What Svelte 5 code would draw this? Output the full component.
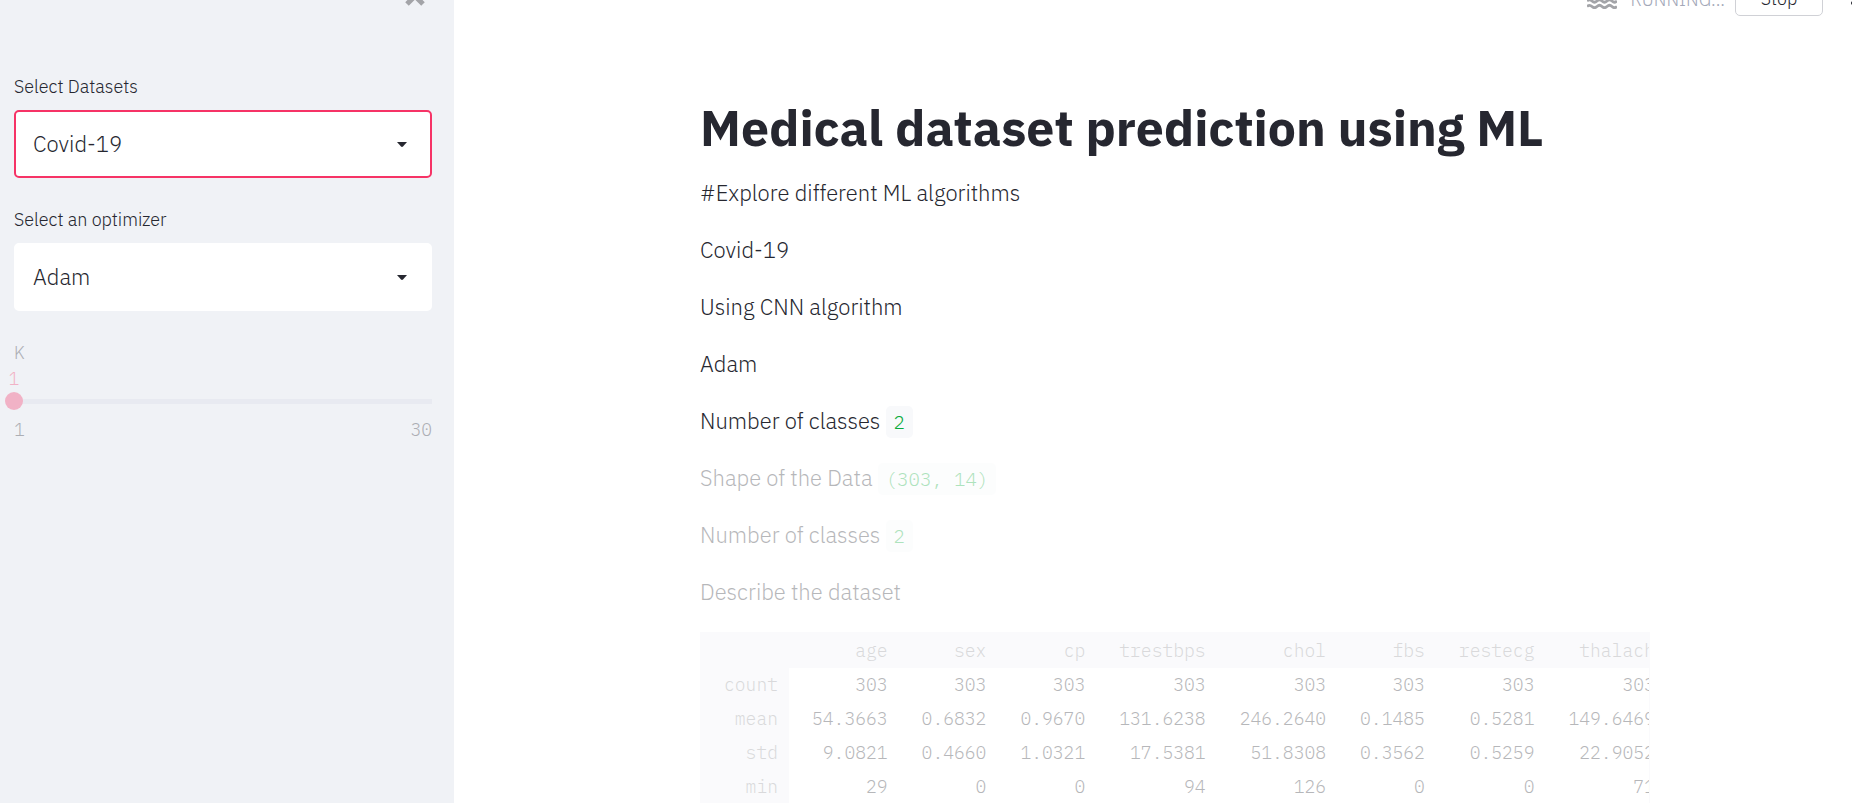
<script lang="ts">
  const datasets = ['Covid-19', 'Heart Disease', 'Breast Cancer'];
  const optimizers = ['Adam', 'SGD', 'RMSprop'];

  let dataset = $state('Covid-19');
  let optimizer = $state('Adam');
  let k = $state(1);

  const columns = ['age', 'sex', 'cp', 'trestbps', 'chol', 'fbs', 'restecg', 'thalach'];
  const rows = [
    { name: 'count', values: ['303', '303', '303', '303', '303', '303', '303', '303'] },
    { name: 'mean', values: ['54.3663', '0.6832', '0.9670', '131.6238', '246.2640', '0.1485', '0.5281', '149.6469'] },
    { name: 'std', values: ['9.0821', '0.4660', '1.0321', '17.5381', '51.8308', '0.3562', '0.5259', '22.9052'] },
    { name: 'min', values: ['29', '0', '0', '94', '126', '0', '0', '71'] },
  ];
</script>

<div class="app">
  <aside class="sidebar">
    <div class="sidebar-top">
      <button class="close" aria-label="Close sidebar">
        <svg width="20" height="20" viewBox="0 0 20 20">
          <path d="M2 2l16 16M18 2L2 18" stroke="#a3a4a8" stroke-width="5" fill="none" />
        </svg>
      </button>
    </div>

    <div class="field">
      <label for="dataset">Select Datasets</label>
      <div class="select-wrap">
        <select id="dataset" class="focused" bind:value={dataset}>
          {#each datasets as d}
            <option>{d}</option>
          {/each}
        </select>
        <svg class="arrow" width="10" height="6" viewBox="0 0 10 6"><path d="M0 0h10L6 4.6q-1 .8-2 0z" fill="#262730" /></svg>
      </div>
    </div>

    <div class="field">
      <label for="optimizer">Select an optimizer</label>
      <div class="select-wrap">
        <select id="optimizer" bind:value={optimizer}>
          {#each optimizers as o}
            <option>{o}</option>
          {/each}
        </select>
        <svg class="arrow" width="10" height="6" viewBox="0 0 10 6"><path d="M0 0h10L6 4.6q-1 .8-2 0z" fill="#262730" /></svg>
      </div>
    </div>

    <div class="slider stale">
      <label for="k">K</label>
      <output for="k" style="margin-left: {((k - 1) / 29) * 100}%">{k}</output>
      <div class="track">
        <input id="k" type="range" min="1" max="30" bind:value={k} />
      </div>
      <div class="ticks"><span>1</span><span>30</span></div>
    </div>
  </aside>

  <main>
    <header class="toolbar">
      <svg class="waves" width="30" height="22" viewBox="0 0 30 22" fill="none" stroke="#a3a4a8" stroke-width="2.6">
        <path d="M0 3q2.500-2.500 5 0t5 0t5 0t5 0t5 0t5 0" />
        <path d="M0 8.500q2.500-2.500 5 0t5 0t5 0t5 0t5 0t5 0" />
        <path d="M0 14q2.500-2.500 5 0t5 0t5 0t5 0t5 0t5 0" />
        <path d="M0 19.500q2.500-2.500 5 0t5 0t5 0t5 0t5 0t5 0" />
      </svg>
      <span class="status">RUNNING...</span>
      <button class="stop">Stop</button>
      <button class="menu" aria-label="Menu">
        <svg width="6" height="26" viewBox="0 0 6 26" fill="#262730">
          <circle cx="3" cy="3" r="2" /><circle cx="3" cy="13" r="2" /><circle cx="3" cy="23" r="2" />
        </svg>
      </button>
    </header>

    <div class="block">
      <h1>Medical dataset prediction using ML</h1>
      <p>#Explore different ML algorithms</p>
      <p>{dataset}</p>
      <p>Using CNN algorithm</p>
      <p>{optimizer}</p>
      <p>Number of classes <code>2</code></p>
      <p class="stale">Shape of the Data <code>(303, 14)</code></p>
      <p class="stale">Number of classes <code>2</code></p>
      <p class="stale">Describe the dataset</p>

      <div class="dataframe stale">
        <table>
          <thead>
            <tr>
              <th></th>
              {#each columns as c}
                <th scope="col">{c}</th>
              {/each}
            </tr>
          </thead>
          <tbody>
            {#each rows as row (row.name)}
              <tr>
                <th scope="row">{row.name}</th>
                {#each row.values as v}
                  <td>{v}</td>
                {/each}
              </tr>
            {/each}
          </tbody>
        </table>
      </div>
    </div>
  </main>
</div>

<style>
  :global(body) {
    background: #fff;
  }

  .app {
    --mono: 'IBM Plex Mono', 'Liberation Mono', monospace;
    display: flex;
    height: 100vh;
    overflow: hidden;
    font-family: 'IBM Plex Sans', 'Open Sans', sans-serif;
    font-size: 22px;
    font-weight: 300;
    line-height: 34px;
    color: #262730;
  }

  .stale {
    opacity: 0.33;
  }

  /* --- Sidebar --- */

  .sidebar {
    flex: 0 0 454px;
    box-sizing: border-box;
    padding: 0 22px 0 14px;
    background: #f0f2f6;
  }

  .sidebar-top {
    display: flex;
    justify-content: flex-end;
    align-items: flex-end;
    height: 6px;
    margin-bottom: 68px;
    padding-right: 7px;
  }

  .close {
    display: flex;
    padding: 0;
    border: none;
    background: none;
  }

  .field {
    margin-bottom: 29px;
  }

  label {
    display: block;
    font-size: 18px;
    line-height: 26px;
  }

  .field label {
    margin-bottom: 10px;
  }

  .select-wrap {
    position: relative;
  }

  select {
    display: block;
    width: 100%;
    height: 68px;
    padding: 0 40px 0 17px;
    appearance: none;
    border: 2px solid #fff;
    border-radius: 5px;
    background: #fff;
    font: inherit;
    color: inherit;
    outline: none;
  }

  select.focused {
    border-color: #f63366;
  }

  .arrow {
    position: absolute;
    top: 32px;
    right: 25px;
    pointer-events: none;
  }

  .slider {
    font-family: var(--mono);
    font-size: 18px;
    line-height: 25px;
  }

  output {
    display: block;
    width: 20px;
    text-align: center;
    color: #f63366;
    transform: translateX(-50%);
  }

  .track {
    display: flex;
    align-items: center;
    height: 18px;
    margin-top: 1px;
    background: linear-gradient(#d9dbe9, #d9dbe9) center / 100% 5px no-repeat;
  }

  input {
    flex: 1;
    height: 18px;
    margin: 0 -9px;
    appearance: none;
    background: none;
  }

  input::-webkit-slider-thumb {
    appearance: none;
    width: 18px;
    height: 18px;
    border-radius: 50%;
    background: #f63366;
  }

  .ticks {
    display: flex;
    justify-content: space-between;
    margin-top: 7px;
  }

  /* --- Main --- */

  main {
    flex: 1;
    min-width: 0;
  }

  .toolbar {
    display: flex;
    justify-content: flex-end;
    align-items: flex-end;
    height: 16px;
  }

  .waves {
    margin: 0 14px 7px 0;
  }

  .status {
    font-size: 18px;
    line-height: 32px;
    color: #a3a8b8;
  }

  .stop {
    width: 88px;
    height: 36px;
    margin: 0 27px 0 10px;
    border: 1px solid #d0d1d6;
    border-radius: 5px;
    background: #fff;
    font: inherit;
    font-size: 18px;
    color: inherit;
  }

  .menu {
    width: 2px;
    padding: 0 0 10px;
    border: none;
    background: none;
  }

  .menu svg {
    display: block;
  }

  .block {
    max-width: 950px;
    margin: 0 auto;
    padding: 79px 0 0 44px;
  }

  h1 {
    margin: 0 0 15px;
    font-size: 50px;
    font-weight: 700;
    line-height: 66px;
    white-space: nowrap;
  }

  p {
    margin: 0 0 23px;
  }

  code {
    padding: 4px 8px;
    border-radius: 5px;
    background: #f8f9fb;
    font-family: var(--mono);
    font-size: 19px;
    line-height: 1;
    color: #09ab3b;
  }

  /* --- Dataframe --- */

  .dataframe {
    overflow: hidden;
    border: 1px solid #f0f2f6;
  }

  table {
    border-collapse: collapse;
    font-family: var(--mono);
    font-size: 18px;
    line-height: 34px;
  }

  th,
  td {
    padding: 0 11px 0 23px;
    text-align: right;
    font-weight: 300;
    white-space: nowrap;
  }

  th {
    background: #f0f2f6;
    color: #8d8e94;
  }

  thead th {
    padding-top: 1px;
  }
</style>
